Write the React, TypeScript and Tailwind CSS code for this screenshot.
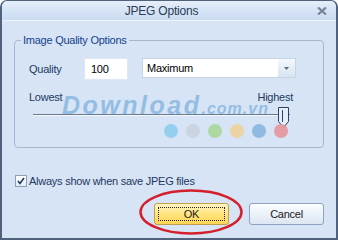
import { useState } from "react";

const dots = ["#8fcdef", "#c9d4df", "#a9d69b", "#efd29c", "#88b6e0", "#e8959b"];

function SliderThumb() {
  return (
    <svg width="12" height="22" viewBox="0 0 12 22" className="block">
      <path d="M0.5 0.5 H10.5 V14.5 L5.5 20.5 L0.5 14.5 Z" fill="#e4edf8" stroke="#2c4468" strokeWidth="1" />
      <path d="M4.5 3 V15" stroke="#2c4468" strokeWidth="1" />
    </svg>
  );
}

export default function App() {
  const [quality, setQuality] = useState("100");
  const [alwaysShow, setAlwaysShow] = useState(true);

  return (
    <div className="relative w-[338px] h-[240px] overflow-hidden flex flex-col bg-[#d6e4f5] border-x-2 border-b-2 border-t border-[#50627c] rounded-t-[7px] font-['Liberation_Sans',Arial,sans-serif] text-[11px] tracking-[-0.25px]">
      {/* title bar */}
      <div className="h-[20px] flex items-center bg-linear-to-b from-[#e6eefa] via-[#d6e4f6] to-[#cbdcf2] border-b border-[#eef4fb]">
        <div className="flex-1 pl-[4px] text-center text-[12px] tracking-[-0.2px] text-[#2b3b55]">JPEG Options</div>
        <svg width="10" height="8" viewBox="0 0 10 8" className="mr-[9px]">
          <path d="M1 0.5 L9 7.5 M9 0.5 L1 7.5" stroke="#76849a" strokeWidth="2.2" />
        </svg>
      </div>

      <div className="flex-1 px-[12px] flex flex-col">
        <fieldset className="mt-[12px] border border-[#a7b8ce] rounded-[4px] pl-[14px] pt-[11px] pb-[31px]">
          <legend className="ml-[-8px] px-[2px] leading-[14px] text-[#15428b]">Image Quality Options</legend>

          <div className="flex items-start h-[22px]">
            <span className="w-[55px] mt-[3px] text-[#1e3a5f]">Quality</span>
            <input
              value={quality}
              onChange={(e) => setQuality(e.target.value)}
              className="w-[44px] h-[22px] pl-[6px] bg-white border border-[#dfe7f1] outline-none text-[11px] text-black"
            />
            <div className="ml-[14px] w-[154px] h-[20px] flex bg-white border border-[#c6d4e4]">
              <span className="flex-1 pl-[4px] leading-[18px] text-black">Maximum</span>
              <div className="w-[17px] flex items-center justify-center bg-linear-to-b from-[#f4f8fd] to-[#d8e4f2]">
                <svg width="5" height="3" viewBox="0 0 5 3">
                  <path d="M0 0 H5 L2.5 3 Z" fill="#5b6b80" />
                </svg>
              </div>
            </div>
          </div>

          <div className="mt-[10px] w-[264px] h-[14px] leading-[14px] flex justify-between text-[#1e3a5f]">
            <span>Lowest</span>
            <span>Highest</span>
          </div>

          <div className="relative mt-[10px] ml-[4px] w-[257px] h-[2px] border-t border-[#6b7a8d] border-b border-b-[#f4f8fc]">
            <div className="absolute left-[245px] top-[-8px]">
              <SliderThumb />
            </div>
          </div>
        </fieldset>

        <label className="mt-[26px] ml-[1px] flex items-center gap-[2px] text-[#1f3860] leading-[14px]">
          <span
            onClick={() => setAlwaysShow(!alwaysShow)}
            className="w-[12px] h-[12px] flex items-center justify-center border border-[#8e9eb3] bg-linear-to-b from-white to-[#e3ebf4]"
          >
            {alwaysShow && (
              <svg width="8" height="8" viewBox="0 0 8 8">
                <path d="M1 4 L3 6.5 L7 1" fill="none" stroke="#21386b" strokeWidth="1.6" />
              </svg>
            )}
          </span>
          Always show when save JPEG files
        </label>

        <div className="mt-[15px] flex justify-end gap-[20px]">
          <button className="relative w-[75px] h-[22px] rounded-[3px] border border-[#c29f4c] bg-linear-to-b from-[#fff5c4] via-[#ffe47e] to-[#ffd455] text-[11px] text-[#1a1a1a]">
            <span className="absolute inset-[3px] border border-dotted border-[#222]" />
            OK
          </button>
          <button className="w-[75px] h-[22px] rounded-[3px] border border-[#8ea3be] bg-linear-to-b from-[#fbfdff] to-[#dce6f2] text-[11px] text-[#1a1a1a]">
            Cancel
          </button>
        </div>
      </div>

      {/* watermark */}
      <div className="pointer-events-none absolute left-[60px] top-[90px] flex items-baseline italic font-bold text-[#7fb0dd] opacity-75">
        <span className="text-[25px] tracking-[2.5px] leading-[28px]">Download</span>
        <span className="text-[16px] tracking-[1px]">.com.vn</span>
      </div>
      <div className="pointer-events-none absolute left-[162px] top-[123px] flex gap-[8px] opacity-90">
        {dots.map((c) => (
          <span key={c} className="w-[14px] h-[14px] rounded-full" style={{ backgroundColor: c }} />
        ))}
      </div>

      {/* red highlight around OK */}
      <svg width="106" height="48" viewBox="0 0 106 48" className="pointer-events-none absolute left-[136px] top-[187px]">
        <ellipse cx="53" cy="24" rx="50.5" ry="21.5" fill="none" stroke="#d3202c" strokeWidth="2.5" />
      </svg>
    </div>
  );
}
